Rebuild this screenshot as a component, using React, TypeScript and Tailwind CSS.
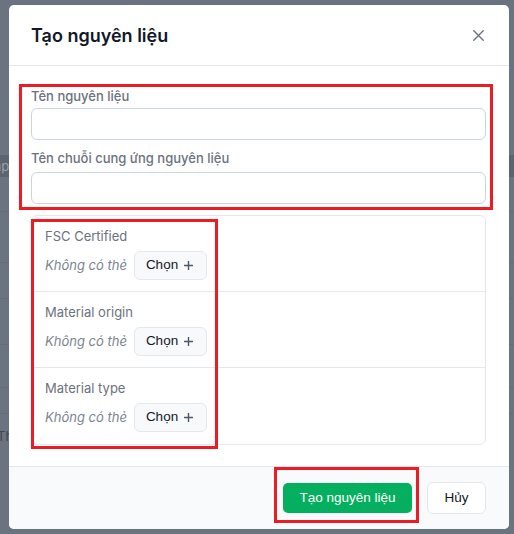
import React from "react";

const sans = { fontFamily: "Inter, 'Noto Sans', sans-serif" };
const btnFont = { fontFamily: "'Liberation Sans', Arial, sans-serif" };

function PlusIcon() {
  return (
    <svg width="9" height="9" viewBox="0 0 9 9" className="shrink-0">
      <path d="M4.5 0.5v8M0.5 4.5h8" stroke="#4b5563" strokeWidth="1.4" strokeLinecap="round" />
    </svg>
  );
}

function Row({ label, last }: { label: string; last?: boolean }) {
  return (
    <div className={`h-[76px] px-[13px] pt-[10px] flex flex-col ${last ? "" : "border-b border-[#e5e7eb]"}`}>
      <div className="h-[20px] leading-[20px] text-[13px] text-[#6b7280]">{label}</div>
      <div className="mt-[5px] flex items-center gap-[7px]">
        <span className="text-[13px] italic text-[#7b8491]">Không có thẻ</span>
        <button
          style={btnFont}
          className="h-[29px] w-[73px] pl-[11px] rounded-[6px] border border-[#e5e7eb] bg-[#f8f9fb] flex items-center gap-[6px] text-[13.5px] text-[#111827]"
        >
          <span>Chọn</span>
          <PlusIcon />
        </button>
      </div>
    </div>
  );
}

export default function App() {
  return (
    <div style={sans} className="relative w-[514px] h-[534px] overflow-hidden bg-[#6b7280]">
      {/* underlying page (dimmed) */}
      <div className="flex flex-col w-[514px]">
        <div className="h-[155px]" />
        <div className="h-[22px] bg-[#5c6371] text-[13px] leading-[22px] text-[#9aa1ab] -ml-[6px]">ap</div>
        <div className="h-[35px] border-b border-[#656c78]" />
        <div className="h-[51px] border-b border-[#656c78]" />
        <div className="h-[36px] border-b border-[#656c78]" />
        <div className="h-[46px] border-b border-[#656c78]" />
        <div className="h-[43px] border-b border-[#656c78]" />
        <div className="h-[26px] border-b border-[#656c78]" />
        <div className="h-[8px]" />
        <div className="h-[28px] text-[13px] leading-[28px] text-[#3f4550] -ml-[3px]">Th</div>
      </div>

      {/* modal */}
      <div className="absolute left-[9px] top-[5px] w-[500px] h-[524px] bg-white rounded-[5px] flex flex-col overflow-hidden">
        <div className="h-[61px] shrink-0 pl-[22px] pr-[25px] flex items-center justify-between border-b border-[#e5e7eb]">
          <h2 className="text-[18px] font-semibold text-[#111827]">Tạo nguyên liệu</h2>
          <svg width="11" height="11" viewBox="0 0 11 11">
            <path d="M0.75 0.75l9.5 9.5M10.25 0.75l-9.5 9.5" stroke="#6b7280" strokeWidth="1.4" strokeLinecap="round" />
          </svg>
        </div>

        <div className="h-[400px] shrink-0 pl-[22px] pr-[23px] pt-[20px] flex flex-col">
          <label className="h-[20px] leading-[20px] text-[13px] font-medium text-[#6b7280]">Tên nguyên liệu</label>
          <input className="mt-[2px] h-[32px] w-full rounded-[6px] border border-[#cbd5e1] bg-white outline-none" />
          <label className="mt-[8px] h-[20px] leading-[20px] text-[13px] font-medium text-[#6b7280]">
            Tên chuỗi cung ứng nguyên liệu
          </label>
          <input className="mt-[4px] h-[32px] w-full rounded-[6px] border border-[#cbd5e1] bg-white outline-none" />

          <div className="mt-[11px] rounded-[6px] border border-[#e5e7eb] flex flex-col">
            <Row label="FSC Certified" />
            <Row label="Material origin" />
            <Row label="Material type" last />
          </div>
        </div>

        <div className="flex-1 border-t border-[#e5e7eb] bg-[#f9fafb] flex items-center justify-end pr-[23px] gap-[15px]">
          <button
            style={btnFont}
            className="h-[30px] w-[129px] rounded-[5px] bg-[#04af5f] text-white text-[13.5px]"
          >
            Tạo nguyên liệu
          </button>
          <button
            style={btnFont}
            className="h-[32px] w-[59px] rounded-[6px] border border-[#e5e7eb] bg-white text-[#111827] text-[13.5px]"
          >
            Hủy
          </button>
        </div>
      </div>

      {/* annotation boxes */}
      <div className="absolute left-[19px] top-[84px] w-[474px] h-[126px] border-[3px] border-[#ec1c24]" />
      <div className="absolute left-[31px] top-[219px] w-[187px] h-[230px] border-[3px] border-[#ec1c24]" />
      <div className="absolute left-[274px] top-[467px] w-[145px] h-[56px] border-[3px] border-[#ec1c24]" />
    </div>
  );
}
